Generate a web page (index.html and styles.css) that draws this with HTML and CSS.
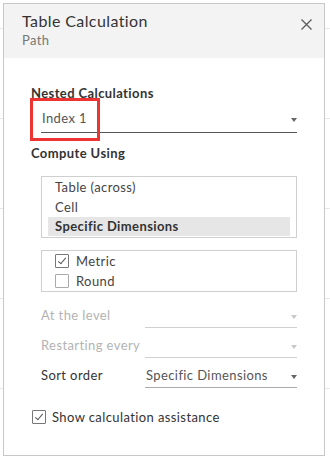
FILE: index.html
```html
<!DOCTYPE html>
<html>
<head>
<meta charset="utf-8">
<link rel="stylesheet" href="styles.css">
</head>
<body>
<div class="dialog">
  <div class="header">
    <div class="titles">
      <div class="title">Table Calculation</div>
      <div class="subtitle">Path</div>
    </div>
    <svg class="close" width="11" height="11" viewBox="0 0 11 11"><path d="M0.5 0.5 L10.5 10.5 M10.5 0.5 L0.5 10.5" stroke="#5a5a5a" stroke-width="1.3" fill="none"/></svg>
  </div>
  <div class="content">
    <div class="section-label">Nested Calculations</div>
    <div class="select nested">
      <span class="value">Index 1</span>
      <span class="arrow"></span>
      <span class="highlight"></span>
    </div>
    <div class="section-label compute">Compute Using</div>
    <div class="listbox">
      <div class="item">Table (across)</div>
      <div class="item">Cell</div>
      <div class="item selected">Specific Dimensions</div>
    </div>
    <div class="checklist">
      <div class="check-row"><span class="box checked dark"></span><span>Metric</span></div>
      <div class="check-row"><span class="box"></span><span>Round</span></div>
    </div>
    <div class="field-row disabled">
      <span class="field-label">At the level</span>
      <div class="dropdown"><span class="value"></span><span class="arrow"></span></div>
    </div>
    <div class="field-row disabled">
      <span class="field-label">Restarting every</span>
      <div class="dropdown"><span class="value"></span><span class="arrow"></span></div>
    </div>
    <div class="field-row">
      <span class="field-label">Sort order</span>
      <div class="dropdown"><span class="value">Specific Dimensions</span><span class="arrow"></span></div>
    </div>
    <div class="check-row assist"><span class="box checked dark"></span><span>Show calculation assistance</span></div>
  </div>
</div>
</body>
</html>
```
FILE: styles.css
```css
* { box-sizing: border-box; }
html, body { margin: 0; padding: 0; }
body {
  width: 330px;
  height: 460px;
  overflow: hidden;
  font-family: Lato, "Open Sans", sans-serif;
  font-size: 13px;
  letter-spacing: 0.4px;
  color: #333;
  background-color: #fff;
  background-image: linear-gradient(to bottom, #e8e8e8 0 1px, transparent 1px);
  background-size: 100% 90px;
  background-position: 0 28px;
  padding-top: 3px;
  padding-left: 3px;
}
.dialog {
  width: 322px;
  height: 453px;
  border: 1px solid #c8c8c8;
  background: #fff;
  display: flex;
  flex-direction: column;
}
.header {
  height: 54px;
  background: #f3f3f3;
  display: flex;
  justify-content: space-between;
  align-items: flex-start;
  padding: 7px 0 0 18px;
}
.title {
  font-size: 16px;
  line-height: 20px;
  color: #333;
}
.subtitle {
  font-size: 13px;
  line-height: 18px;
  color: #777;
}
.close {
  margin: 8px 12px 0 0;
}
.content {
  padding: 25px 0 0 27px;
}
.section-label {
  font-weight: bold;
  line-height: 20px;
  color: #333;
}
.select {
  position: relative;
  margin-left: 10px;
  width: 256px;
  height: 30px;
  padding: 5px 0 0 1px;
  border-bottom: 1px solid #555;
  display: flex;
  justify-content: space-between;
}
.value { line-height: 20px; color: #555; }
.arrow {
  width: 0;
  height: 0;
  margin-top: 10px;
  border-left: 3px solid transparent;
  border-right: 3px solid transparent;
  border-top: 4px solid #666;
}
.highlight {
  position: absolute;
  left: -11px;
  top: -5px;
  width: 70px;
  height: 43px;
  border: 3px solid #ee3333;
}
.compute { margin-top: 10px; }
.listbox {
  margin: 13px 0 0 10px;
  width: 256px;
  height: 62px;
  border: 1px solid #cfcfcf;
  padding: 0 6px;
}
.item {
  height: 20px;
  line-height: 20px;
  padding-left: 7px;
  color: #444;
}
.item.selected {
  background: #e6e6e6;
  font-weight: bold;
  color: #333;
  height: 19px;
  line-height: 19px;
}
.checklist {
  margin: 12px 0 0 10px;
  width: 256px;
  height: 42px;
  border: 1px solid #cfcfcf;
  padding-left: 13px;
}
.check-row {
  display: flex;
  align-items: center;
  height: 20px;
  gap: 7px;
  color: #444;
}
.box {
  width: 14px;
  height: 14px;
  border: 1px solid #aaa;
  border-radius: 1px;
  position: relative;
  flex: none;
}
.box.dark { border-color: #777; }
.box.checked::after {
  content: "";
  position: absolute;
  left: 4px;
  top: 1px;
  width: 3px;
  height: 7px;
  border-right: 1.5px solid #555;
  border-bottom: 1.5px solid #555;
  transform: rotate(40deg);
}
.field-row {
  display: flex;
  margin-left: 10px;
  width: 256px;
  height: 30px;
}
.checklist + .field-row { margin-top: 6px; }
.field-label {
  width: 104px;
  padding-top: 7px;
  line-height: 20px;
  color: #333;
}
.dropdown {
  flex: 1;
  display: flex;
  justify-content: space-between;
  padding: 7px 0 0 1px;
  border-bottom: 1px solid #aaa;
}
.field-row.disabled .field-label { color: #b3b3b3; }
.field-row.disabled .dropdown { border-bottom-color: #d0d0d0; }
.field-row.disabled .arrow { border-top-color: #c8c8c8; }
.assist {
  margin: 19px 0 0 1px;
  gap: 6px;
  color: #333;
}
```
